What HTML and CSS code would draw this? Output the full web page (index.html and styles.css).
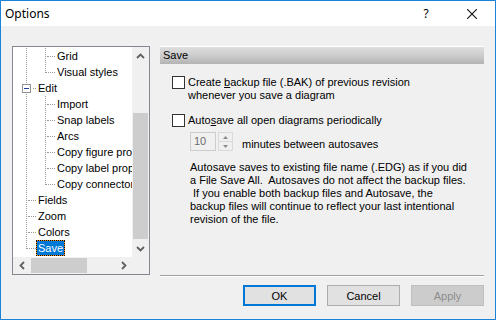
FILE: index.html
```html
<!DOCTYPE html>
<html lang="en">
<head>
    <meta charset="UTF-8">
    <title>Options</title>
    <link rel="stylesheet" href="styles.css">
</head>
<body>
    <div class="window">
        <div class="titlebar">
            <span class="title">Options</span>
            <span class="caption_btn">?</span>
            <span class="caption_btn">
                <svg width="10" height="10" viewBox="0 0 10 10"><path d="M0 0L10 10M10 0L0 10" stroke="#111" stroke-width="1.1" fill="none"/></svg>
            </span>
        </div>
        <div class="client">
            <div class="main">
                <div class="tree">
                    <div class="tree_items">
                        <div class="row"><span class="pipe"></span><span class="tee"><i></i></span><span class="label">Grid</span></div>
                        <div class="row"><span class="pipe"></span><span class="elbow"><i></i></span><span class="label">Visual styles</span></div>
                        <div class="row"><span class="expander"><b class="box"></b><i></i></span><span class="label">Edit</span></div>
                        <div class="row"><span class="pipe"></span><span class="tee"><i></i></span><span class="label">Import</span></div>
                        <div class="row"><span class="pipe"></span><span class="tee"><i></i></span><span class="label">Snap labels</span></div>
                        <div class="row"><span class="pipe"></span><span class="tee"><i></i></span><span class="label">Arcs</span></div>
                        <div class="row"><span class="pipe"></span><span class="tee"><i></i></span><span class="label">Copy figure properties</span></div>
                        <div class="row"><span class="pipe"></span><span class="tee"><i></i></span><span class="label">Copy label properties</span></div>
                        <div class="row"><span class="pipe"></span><span class="elbow"><i></i></span><span class="label">Copy connector properties</span></div>
                        <div class="row"><span class="tee"><i></i></span><span class="label">Fields</span></div>
                        <div class="row"><span class="tee"><i></i></span><span class="label">Zoom</span></div>
                        <div class="row"><span class="tee"><i></i></span><span class="label">Colors</span></div>
                        <div class="row"><span class="elbow"><i></i></span><span class="label selected">Save</span></div>
                    </div>
                    <div class="vscroll">
                        <span class="sb_btn"><svg width="9" height="6" viewBox="0 0 9 6"><path d="M1 5L4.5 1.5L8 5" stroke="#606060" stroke-width="1.8" fill="none"/></svg></span>
                        <span class="v_track"><span class="v_thumb"></span></span>
                        <span class="sb_btn"><svg width="9" height="6" viewBox="0 0 9 6"><path d="M1 1L4.5 4.5L8 1" stroke="#606060" stroke-width="1.8" fill="none"/></svg></span>
                    </div>
                    <div class="hscroll">
                        <span class="sb_btn"><svg width="6" height="9" viewBox="0 0 6 9"><path d="M5 1L1.5 4.5L5 8" stroke="#606060" stroke-width="1.8" fill="none"/></svg></span>
                        <span class="h_track"><span class="h_thumb"></span></span>
                        <span class="sb_btn"><svg width="6" height="9" viewBox="0 0 6 9"><path d="M1 1L4.5 4.5L1 8" stroke="#606060" stroke-width="1.8" fill="none"/></svg></span>
                    </div>
                    <div class="corner"></div>
                </div>
                <div class="side">
                    <div class="page">
                        <div class="page_head">Save</div>
                        <div class="check_row first">
                            <span class="checkbox"></span>
                            <span>Create <u>b</u>ackup file (.BAK) of previous revision<br>whenever you save a diagram</span>
                        </div>
                        <div class="check_row">
                            <span class="checkbox"></span>
                            <span>Auto<u>s</u>ave all open diagrams periodically</span>
                        </div>
                        <div class="spin_row">
                            <span class="spin_field">10</span>
                            <span class="updown">
                                <span class="ud_half"><svg width="5" height="3" viewBox="0 0 5 3"><path d="M0 3L2.5 0L5 3Z" fill="#8a8a8a"/></svg></span>
                                <span class="ud_half"><svg width="5" height="3" viewBox="0 0 5 3"><path d="M0 0L2.5 3L5 0Z" fill="#8a8a8a"/></svg></span>
                            </span>
                            <span class="spin_label">minutes between autosaves</span>
                        </div>
                        <p class="note">Autosave saves to existing file name (.EDG) as if you did<br>a File Save All.&nbsp; Autosaves do not affect the backup files.<br>&nbsp;If you enable both backup files and Autosave, the<br>backup files will continue to reflect your last intentional<br>revision of the file.</p>
                    </div>
                    <div class="sep"></div>
                </div>
            </div>
            <div class="buttons">
                <button type="button" class="btn default">OK</button>
                <button type="button" class="btn">Cancel</button>
                <button type="button" class="btn" disabled>Apply</button>
            </div>
        </div>
    </div>
</body>
</html>
```

FILE: styles.css
```css
body {
    margin: 0;
    font-family: "Liberation Sans", Arial, sans-serif;
    font-size: 11px;
    color: #000;
}
.window {
    width: 496px;
    height: 320px;
    box-sizing: border-box;
    border: 1px solid #1883d7;
    background-color: #f0f0f0;
    display: flex;
    flex-direction: column;
}
.titlebar {
    height: 25px;
    background-color: #fff;
    display: flex;
    align-items: center;
    flex: none;
}
.title {
    font-family: "Noto Sans", sans-serif;
    font-size: 12px;
    padding-left: 4px;
    flex: 1;
}
.caption_btn {
    width: 46px;
    height: 25px;
    display: flex;
    align-items: center;
    justify-content: center;
    font-family: "Noto Sans", sans-serif;
    font-size: 12px;
}
.client {
    flex: 1;
    padding: 20px 11px 0 11px;
}
.main {
    display: flex;
    gap: 10px;
    align-items: flex-start;
}
/* tree view */
.tree {
    width: 138px;
    height: 229px;
    box-sizing: border-box;
    border: 1px solid #828790;
    background-color: #fff;
    display: grid;
    grid-template-columns: 119px 17px;
    grid-template-rows: 210px 17px;
    flex: none;
}
.tree_items {
    overflow: hidden;
    padding-top: 1px;
}
.row {
    display: flex;
    height: 16px;
    white-space: nowrap;
}
.pipe, .tee, .expander {
    background: linear-gradient(#9a9a9a 50%, transparent 50%) 13px 0 / 1px 2px repeat-y;
}
.pipe {
    width: 19px;
    flex: none;
}
.tee, .elbow, .expander {
    width: 23px;
    flex: none;
}
.tee i {
    display: block;
    margin-left: 15px;
    height: 8px;
    border-bottom: 1px dotted #9a9a9a;
}
.elbow i {
    display: block;
    margin-left: 13px;
    height: 8px;
    border-left: 1px dotted #9a9a9a;
    border-bottom: 1px dotted #9a9a9a;
}
.expander {
    display: flex;
    align-items: center;
}
.expander .box {
    margin-left: 9px;
    width: 9px;
    height: 9px;
    box-sizing: border-box;
    border: 1px solid #919191;
    background: linear-gradient(#1f3f9a, #1f3f9a) center / 5px 1px no-repeat, #fff;
}
.expander i {
    flex: 1;
    margin-left: 2px;
    border-top: 1px dotted #9a9a9a;
}
.label {
    padding: 0 2px;
    line-height: 16px;
}
.selected {
    background-color: #0078d7;
    color: #fff;
    box-shadow: inset 0 0 0 1px #f7941d;
    outline: 1px dotted #000;
    outline-offset: -1px;
}
/* scrollbars */
.vscroll {
    background-color: #f0f0f0;
    display: flex;
    flex-direction: column;
}
.sb_btn {
    width: 17px;
    height: 17px;
    display: flex;
    align-items: center;
    justify-content: center;
    flex: none;
}
.v_track {
    flex: 1;
    padding-top: 49px;
}
.v_thumb {
    display: block;
    width: 15px;
    height: 126px;
    margin-left: 1px;
    background-color: #cdcdcd;
}
.hscroll {
    background-color: #f0f0f0;
    display: flex;
}
.h_track {
    flex: 1;
    padding-top: 1px;
}
.h_thumb {
    display: block;
    width: 56px;
    height: 15px;
    margin-left: 1px;
    background-color: #cdcdcd;
}
.corner {
    background-color: #f0f0f0;
}
/* right page */
.side {
    flex: 1;
}
.page {
    height: 229px;
}
.page_head {
    border-top: 1px solid #fff;
    height: 17px;
    line-height: 17px;
    padding-left: 3px;
    background: linear-gradient(#dedede, #cacaca 55%, #b3b3b3);
}
.check_row {
    display: flex;
    align-items: flex-start;
    gap: 3px;
    margin: 12px 0 0 12px;
    line-height: 13px;
}
.checkbox {
    width: 13px;
    height: 13px;
    box-sizing: border-box;
    border: 1px solid #333;
    background-color: #fff;
    flex: none;
}
.spin_row {
    display: flex;
    align-items: center;
    margin: 5px 0 0 30px;
}
.spin_field {
    width: 26px;
    height: 19px;
    box-sizing: border-box;
    border: 1px solid #cccccc;
    color: #6d6d6d;
    padding-left: 3px;
    line-height: 17px;
}
.updown {
    width: 15px;
    height: 19px;
    margin-left: 2px;
    display: flex;
    flex-direction: column;
}
.ud_half {
    flex: 1;
    display: flex;
    align-items: center;
    justify-content: center;
    border: 1px solid #dadada;
}
.ud_half + .ud_half {
    border-top: none;
}
.spin_label {
    margin-left: 9px;
    padding-top: 4px;
}
.note {
    margin: 10px 0 0 30px;
    line-height: 13px;
}
.sep {
    border-top: 1px solid #a0a0a0;
    border-bottom: 1px solid #fff;
}
/* dialog buttons */
.buttons {
    display: flex;
    justify-content: flex-end;
    gap: 11px;
    margin-top: 8px;
}
.btn {
    width: 73px;
    height: 21px;
    box-sizing: border-box;
    border: 1px solid #adadad;
    background-color: #e1e1e1;
    font-family: "Liberation Sans", Arial, sans-serif;
    font-size: 11px;
    color: #000;
    padding: 0;
}
.default {
    border: 2px solid #0078d7;
}
.btn:disabled {
    background-color: #cccccc;
    border-color: #bfbfbf;
    color: #8c8c8c;
}
```
